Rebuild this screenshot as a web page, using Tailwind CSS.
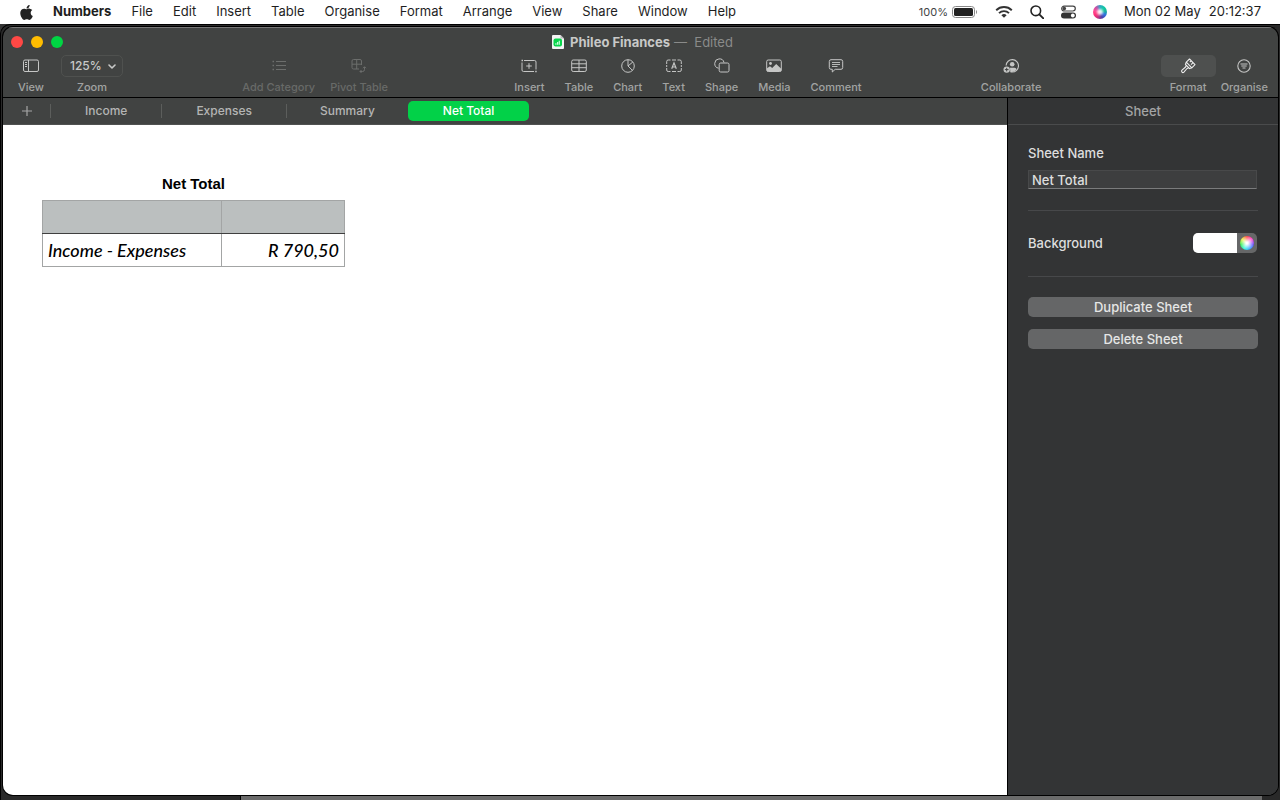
<!DOCTYPE html>
<html lang="en">
<head>
  <meta charset="UTF-8" />
  <title>Phileo Finances</title>
  <meta name="viewport" content="width=device-width, initial-scale=1.0" />
  <script src="https://cdn.jsdelivr.net/npm/@tailwindcss/browser@4"></script>
</head>
<body class="h-screen flex flex-col overflow-hidden bg-[#1c1c1c] font-['Inter',sans-serif] text-[13px]">

  <!-- Menu bar -->
  <header class="h-6 shrink-0 flex items-center justify-between bg-white pl-5 pr-[19px] text-[#1e1e1e]">
    <nav class="flex items-center gap-5">
      <button aria-label="Apple menu" class="w-[13px]">
        <svg class="w-[13px] h-[17px]" viewBox="0 0 384 512" fill="#222"><path d="M318.7 268.7c-.2-36.7 16.4-64.4 50-84.8-18.8-26.9-47.2-41.7-84.7-44.6-35.5-2.8-74.3 20.7-88.5 20.7-15 0-49.4-19.7-76.4-19.7C63.3 141.2 4 184.8 4 273.5q0 39.3 14.4 81.2c12.8 36.7 59 126.7 107.2 125.2 25.2-.6 43-17.9 75.8-17.9 31.8 0 48.3 17.9 76.4 17.9 48.6-.7 90.4-82.5 102.6-119.3-65.2-30.7-61.7-90-61.7-91.9zm-56.6-164.2c27.3-32.4 24.8-61.9 24-72.5-24.1 1.4-52 16.4-67.9 34.9-17.5 19.8-27.8 44.3-25.6 71.9 26.1 2 49.9-11.4 69.5-34.3z"/></svg>
      </button>
      <button class="font-bold">Numbers</button>
      <button>File</button>
      <button>Edit</button>
      <button>Insert</button>
      <button>Table</button>
      <button>Organise</button>
      <button>Format</button>
      <button>Arrange</button>
      <button>View</button>
      <button>Share</button>
      <button>Window</button>
      <button>Help</button>
    </nav>
    <div class="flex items-center gap-[17px]">
      <div class="flex items-center gap-1">
        <span class="text-[11px] text-[#444]">100%</span>
        <svg class="w-[26px] h-3" viewBox="0 0 26 12"><rect x=".5" y=".5" width="22" height="11" rx="3" fill="none" stroke="#888"/><rect x="2" y="2" width="19" height="8" rx="1.500" fill="#222"/><path d="M24 4v4c1.400-.5 1.400-3.500 0-4z" fill="#888"/></svg>
      </div>
      <svg class="w-[18px] h-3" viewBox="0 0 18 12" fill="none" stroke="#333" stroke-width="1.900"><path d="M1.200 4.200a11.200 11.200 0 0 1 15.600 0M4 7.100a7.200 7.200 0 0 1 10 0"/><path d="M9 11.800 6.400 9.200a3.700 3.700 0 0 1 5.200 0z" fill="#333" stroke="none"/></svg>
      <svg class="w-[14px] h-[14px]" viewBox="0 0 14 14" fill="none" stroke="#222" stroke-width="1.600"><circle cx="5.800" cy="5.800" r="4.800"/><path d="m9.300 9.300 4 4" stroke-width="1.900" stroke-linecap="round"/></svg>
      <svg class="w-[15px] h-[14px]" viewBox="0 0 15 14"><rect x=".7" y="1.200" width="13.600" height="4.800" rx="2.400" fill="none" stroke="#444" stroke-width="1.200"/><circle cx="3.300" cy="3.600" r="1.800" fill="#444"/><rect x="0" y="7.500" width="15" height="6" rx="3" fill="#333"/><circle cx="11.800" cy="10.500" r="1.900" fill="#fff"/></svg>
      <span class="w-[14px] h-[14px] rounded-full flex items-center justify-center bg-[conic-gradient(#2fa9c4,#10c9a4,#18b59b,#2f6fe0,#4a3fa8,#c32f7e,#ff2f78,#ff4a92,#c94fa8,#2fa9c4)]"><span class="w-[6px] h-[6px] rounded-full bg-white/90 blur-[1px]"></span></span>
      <div class="flex gap-2"><span>Mon 02 May</span><time>20:12:37</time></div>
    </div>
  </header>

  <!-- Desktop -->
  <div class="relative flex-1 min-h-0 flex flex-col pt-[3px] pl-[3px] pr-[2px] pb-[5px] bg-[#343434]">
    <div class="absolute inset-0 border-t border-l border-black rounded-tl-[10px] bg-[#292929]"></div>
    <div class="absolute bottom-0 left-[240px] right-[18px] h-2 border-l border-black bg-[#6b6b6b]"></div>

    <!-- Window -->
    <main class="relative flex-1 min-h-0 flex flex-col rounded-[10px] overflow-hidden bg-[#414342] shadow-[0_0_0_1px_#000]">
      <div class="h-7 shrink-0 grid grid-cols-[1fr_auto_1fr] items-center px-2 border-t border-[#777]">
        <div class="flex gap-2">
          <button aria-label="Close" class="w-3 h-3 rounded-full bg-[#ff4845]"></button>
          <button aria-label="Minimise" class="w-3 h-3 rounded-full bg-[#ffbd00]"></button>
          <button aria-label="Zoom window" class="w-3 h-3 rounded-full bg-[#00d543]"></button>
        </div>
        <h1 class="flex items-center pl-1 leading-4 text-[#c8c9c8]">
          <svg class="w-3 h-[14px] mr-[6px]" viewBox="0 0 12 14"><path d="M1 0h7.500L12 3.500V13a1 1 0 0 1-1 1H1a1 1 0 0 1-1-1V1a1 1 0 0 1 1-1z" fill="#f4f4f4"/><path d="M8.500 0v3.500H12z" fill="#bbb"/><rect x="1.500" y="3.500" width="8.500" height="8" rx="2" fill="#0ad64c"/><path d="M3.300 9.800V8.200h1.200v1.600zm1.700 0V7h1.200v2.800zm1.700 0v-4h1.200v4z" fill="#c6ffd8"/></svg>
          <span class="font-bold">Phileo Finances</span>
          <span class="ml-1 text-[#8a8b8a]">—&nbsp; Edited</span>
        </h1>
      </div>

      <!-- Toolbar -->
      <div class="shrink-0 flex justify-between pl-[15px] pr-[10px] pb-[3px] border-b border-black text-[11px] leading-[14px] font-medium text-[#a2a3a2]">
        <div class="flex gap-[17px]">
          <button class="flex flex-col items-center gap-[3px]">
            <span class="h-[22px] flex items-center"><svg class="w-4 h-4" viewBox="0 0 16 16" fill="none" stroke="#c5c6c5"><rect x=".5" y="2" width="15" height="11.500" rx="1.500"/><path d="M5.500 2v11.500M2 4.500h2M2 6.500h2M2 8.500h2"/></svg></span>
            View
          </button>
          <div class="flex flex-col items-center gap-[3px]">
            <div class="relative">
              <select id="zoom" class="block appearance-none w-[62px] h-[22px] pl-2 rounded-[5px] border border-[#4f514f] bg-transparent text-[12px] leading-5 font-medium text-[#c8c9c8]"><option>125%</option></select>
              <svg class="absolute right-[7px] top-2 w-2 h-[7px] pointer-events-none" viewBox="0 0 8 7" fill="none" stroke="#c8c9c8" stroke-width="1.600" stroke-linecap="round" stroke-linejoin="round"><path d="m1 2 3 3 3-3"/></svg>
            </div>
            <label for="zoom">Zoom</label>
          </div>
        </div>

        <div class="flex gap-[15px] pr-[7px] text-[#686a68]">
          <button disabled class="flex flex-col items-center gap-[3px]">
            <span class="h-[22px] flex items-center"><svg class="w-4 h-4" viewBox="0 0 16 16" fill="none" stroke="#6c6e6c"><path d="M5 3.500h10M5 7.500h10M5 11.500h10" stroke-width="1.200"/><path d="M1.500 3.500h1.500M1.500 7.500h1.500M1.500 11.500h1.500" stroke-width="1.600"/></svg></span>
            Add Category
          </button>
          <button disabled class="flex flex-col items-center gap-[3px]">
            <span class="h-[22px] flex items-center"><svg class="w-4 h-4" viewBox="0 0 16 16" fill="none" stroke="#6c6e6c"><path d="M10.500 7V3A1.500 1.500 0 0 0 9 1.500H2.500A1.500 1.500 0 0 0 1 3v6.500A1.500 1.500 0 0 0 2.500 11H8M5.700 1.500V11M1 6.200h9.500"/><path d="M9 13.500h2.500a2 2 0 0 0 2-2V9M10.500 12 9 13.500l1.500 1.500M12 10.200 13.500 8.700 15 10.200"/></svg></span>
            Pivot Table
          </button>
        </div>

        <div class="flex gap-5">
          <button class="flex flex-col items-center gap-[3px]">
            <span class="h-[22px] flex items-center"><svg class="w-4 h-4" viewBox="0 0 16 16" fill="none" stroke="#c5c6c5"><path d="M3 2.500h10.500a1.500 1.500 0 0 1 1.500 1.500v7.500M1 4.500v7.500a1.500 1.500 0 0 0 1.500 1.500h10.500M8 5.200v5.600M5.200 8h5.600"/><path d="M.5 2.500H2M14.200 13.500h1.500" stroke-width="1.500"/></svg></span>
            Insert
          </button>
          <button class="flex flex-col items-center gap-[3px]">
            <span class="h-[22px] flex items-center"><svg class="w-4 h-4" viewBox="0 0 16 16" fill="none" stroke="#c5c6c5"><rect x=".7" y="2" width="14.600" height="11.500" rx="1.500"/><path d="M8 2v11.500M.7 5.800h14.600M.7 9.700h14.600"/></svg></span>
            Table
          </button>
          <button class="flex flex-col items-center gap-[3px]">
            <span class="h-[22px] flex items-center"><svg class="w-4 h-4" viewBox="0 0 16 16" fill="none" stroke="#c5c6c5" stroke-linejoin="round"><circle cx="8" cy="8" r="6.300"/><path d="M8 1.700V8l4.500 4.400M8 8l4.800-4"/></svg></span>
            Chart
          </button>
          <button class="flex flex-col items-center gap-[3px]">
            <span class="h-[22px] flex items-center"><svg class="w-4 h-4" viewBox="0 0 16 16" fill="none" stroke="#c5c6c5"><path d="M.7 6V3.500A1.500 1.500 0 0 1 2.200 2h2.300M6 2h4M11.500 2h2.300a1.500 1.500 0 0 1 1.500 1.500V6M15.300 7v2M15.300 10v2a1.500 1.500 0 0 1-1.500 1.500h-2.300M10 13.500H6M4.500 13.500H2.200A1.500 1.500 0 0 1 .7 12v-2M.7 7v2"/><path d="M5.700 10.700 8 4.900l2.300 5.800M6.400 9h3.200" stroke-width="1.200"/></svg></span>
            Text
          </button>
          <button class="flex flex-col items-center gap-[3px]">
            <span class="h-[22px] flex items-center"><svg class="w-4 h-4" viewBox="0 0 16 16" fill="none" stroke="#c5c6c5"><path d="M4.600 10.200A4.700 4.700 0 1 1 10 4.500"/><rect x="5.200" y="5" width="9.800" height="9" rx="1.500"/></svg></span>
            Shape
          </button>
          <button class="flex flex-col items-center gap-[3px]">
            <span class="h-[22px] flex items-center"><svg class="w-4 h-4" viewBox="0 0 16 16"><rect x=".7" y="2" width="14.600" height="11.500" rx="1.500" fill="none" stroke="#c5c6c5"/><circle cx="4.500" cy="5.500" r="1.400" fill="#c5c6c5"/><path d="M1 13.300v-3l3-2.100 2.200 1.900 4-4 5 4.700v2.500z" fill="#c5c6c5"/></svg></span>
            Media
          </button>
          <button class="flex flex-col items-center gap-[3px]">
            <span class="h-[22px] flex items-center"><svg class="w-4 h-4" viewBox="0 0 16 16" fill="none" stroke="#c5c6c5" stroke-linejoin="round"><path d="M3 1.700h10A1.700 1.700 0 0 1 14.700 3.400v6.200A1.700 1.700 0 0 1 13 11.300H7.200L4.300 14v-2.700H3A1.700 1.700 0 0 1 1.300 9.600V3.400A1.700 1.700 0 0 1 3 1.700z"/><path d="M4 4.500h8M4 6.500h8M4 8.500h5.500" stroke-width=".9"/></svg></span>
            Comment
          </button>
        </div>

        <button class="flex flex-col items-center gap-[3px]">
          <span class="h-[22px] flex items-center"><svg class="w-4 h-4" viewBox="0 0 16 16" fill="none" stroke="#c5c6c5"><path d="M3.100 7.500A6.200 6.200 0 1 1 9.200 14H7.500" stroke-width="1.100"/><circle cx="9.200" cy="6.300" r="2.300" fill="#c5c6c5" stroke="none"/><path d="M7 9.800h4.500c1 0 1.800.8 2 1.700A6 6 0 0 1 9 14H7.300z" fill="#c5c6c5" stroke="none"/><circle cx="3.700" cy="11.600" r="3.200" fill="#c5c6c5" stroke="none"/><path d="M3.700 9.800v3.600M1.900 11.600h3.600" stroke="#414342"/></svg></span>
          Collaborate
        </button>

        <div class="flex gap-[5px]">
          <button class="flex flex-col items-center gap-[3px]">
            <span class="w-[55px] h-[22px] flex items-center justify-center rounded-[5px] bg-[#4e504f]"><svg class="w-4 h-4" viewBox="0 0 16 16" fill="none" stroke="#eee" stroke-width="1.100" stroke-linejoin="round"><path d="M9.500 1 15 6.600 11.800 9.800 6.300 4.200zM6.300 4.200 5.400 6.400l4.200 4.200 2.200-.8M6.200 7.200 5.600 9 2 12.200a1.300 1.300 0 0 0 1.900 1.900L7 10.500l1.800-.7M11.200 2.800 9.800 4.200M13 4.700l-1.900 1.900"/></svg></span>
            Format
          </button>
          <button class="flex flex-col items-center gap-[3px]">
            <span class="h-[22px] flex items-center"><svg class="w-4 h-4" viewBox="0 0 16 16" fill="none" stroke="#c5c6c5"><circle cx="8" cy="8" r="6.200" stroke-width="1.100"/><path d="M4.500 6h7M5.300 8h5.400M6.500 10h3"/></svg></span>
            Organise
          </button>
        </div>
      </div>

      <div class="flex-1 min-h-0 flex">
        <!-- Sheets and canvas -->
        <section class="flex-1 min-w-0 flex flex-col">
          <div class="h-[27px] shrink-0 flex items-center border-b border-[#505251] text-[12px] font-medium text-[#b4b5b4]">
            <button aria-label="Add sheet" class="w-12 h-[14px] flex items-center justify-center border-r border-[#5c5e5c]"><svg class="w-[10px] h-[10px]" viewBox="0 0 10 10" stroke="#a5a6a5" stroke-width="1.200"><path d="M5 0v10M0 5h10"/></svg></button>
            <button class="h-[14px] leading-[14px] px-[34px] border-r border-[#5c5e5c]">Income</button>
            <button class="h-[14px] leading-[14px] px-[34px] border-r border-[#5c5e5c]">Expenses</button>
            <button class="h-[14px] leading-[14px] px-[33px]">Summary</button>
            <button class="h-5 leading-5 px-[35px] rounded-[5px] bg-[#02d148] text-white">Net Total</button>
          </div>
          <div class="flex-1 bg-white pl-[39px] pt-[50px] text-black">
            <table class="w-[303px] table-fixed border-collapse">
              <caption class="h-[25px] leading-[18px] font-['Liberation_Sans',sans-serif] text-[15px] font-bold">Net Total</caption>
              <colgroup><col class="w-[179px]" /><col /></colgroup>
              <thead>
                <tr class="h-[33px] bg-[#bbbfbf] border-b border-b-[#3f3f3f]">
                  <th class="border border-[#a3a5a5] border-b-[#3f3f3f]"></th>
                  <th class="border border-[#a3a5a5] border-b-[#3f3f3f]"></th>
                </tr>
              </thead>
              <tbody class="font-['Bradley_Hand','Lato',cursive] text-[18px] leading-5 font-medium italic">
                <tr class="h-[33px]">
                  <td class="px-[5px] border border-[#a3a5a5] border-t-[#3f3f3f] whitespace-nowrap">Income - Expenses</td>
                  <td class="px-[5px] border border-[#a3a5a5] border-t-[#3f3f3f] text-right">R 790,50</td>
                </tr>
              </tbody>
            </table>
          </div>
        </section>

        <!-- Inspector -->
        <aside class="w-[271px] shrink-0 border-l border-black bg-[#333435] font-medium text-[#dedede]">
          <h2 class="h-[27px] leading-[26px] text-center border-b border-[#4a4b4c] text-[#a3a4a5]">Sheet</h2>
          <div class="px-5">
            <label for="sheet-name" class="block mt-5 leading-4">Sheet Name</label>
            <div class="mt-[9px] pr-px">
              <input id="sheet-name" type="text" value="Net Total" class="block w-full h-[19px] pl-[3px] pt-px border border-[#48494a] border-b-[#7a7b7c] bg-[#3d3e3f] leading-4" />
            </div>
            <hr class="mt-[21px] border-[#47484a]" />
            <div class="mt-[22px] h-5 pr-px flex items-center justify-between">
              <label for="background" class="leading-5">Background</label>
              <div class="flex h-5 rounded-[5px] overflow-hidden bg-[#666768]">
                <input id="background" type="color" value="#ffffff" class="w-11 h-5 appearance-none border-0 p-0 bg-white [&::-webkit-color-swatch-wrapper]:p-0 [&::-webkit-color-swatch]:border-0" />
                <button aria-label="Show colours" class="w-5 h-5 flex items-center justify-center"><span class="w-[14px] h-[14px] rounded-full bg-[radial-gradient(circle,#fff_10%,#fff0_70%),conic-gradient(#ff4040,#ff3fd0,#6a4cff,#2fa8ff,#2ff5e0,#35f050,#e8f040,#ff4040)]"></span></button>
              </div>
            </div>
            <hr class="mt-[23px] border-[#47484a]" />
            <button class="block w-full h-5 mt-5 leading-5 rounded-[5px] bg-[#656667] text-[#e6e6e6]">Duplicate Sheet</button>
            <button class="block w-full h-5 mt-3 leading-5 rounded-[5px] bg-[#656667] text-[#e6e6e6]">Delete Sheet</button>
          </div>
        </aside>
      </div>
    </main>
  </div>
</body>
</html>
